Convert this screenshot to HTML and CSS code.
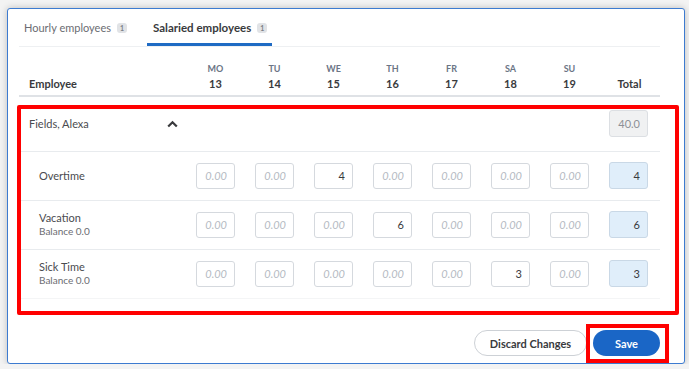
FILE: index.html
```html
<!DOCTYPE html>
<html lang="en">
<head>
    <meta charset="UTF-8">
    <meta name="viewport" content="width=device-width, initial-scale=1.0">
    <title>Timesheet</title>
    <link rel="stylesheet" href="styles.css">
</head>
<body>
    <div class="card">
        <!-- tabs -->
        <div class="tabs">
            <div class="tab">Hourly employees <span class="badge">1</span></div>
            <div class="tab active">Salaried employees <span class="badge">1</span></div>
        </div>

        <!-- week header -->
        <div class="grid head">
            <div class="emp-head">Employee</div>
            <div class="day"><span>MO</span>13</div>
            <div class="day"><span>TU</span>14</div>
            <div class="day"><span>WE</span>15</div>
            <div class="day"><span>TH</span>16</div>
            <div class="day"><span>FR</span>17</div>
            <div class="day"><span>SA</span>18</div>
            <div class="day"><span>SU</span>19</div>
            <div class="day total-head">Total</div>
        </div>

        <div class="group marked">
            <div class="grid emp-row">
                <div class="emp-name">
                    Fields, Alexa
                    <svg width="11" height="8" viewBox="0 0 11 8"><path d="M1.2 6.6 L5.5 2.2 L9.8 6.6" fill="none" stroke="#393a3d" stroke-width="2.2"/></svg>
                </div>
                <div class="cell total"><input class="box grey" value="40.0" readonly></div>
            </div>

            <div class="grid row">
                <div class="label">Overtime</div>
                <div class="cell"><input class="box" placeholder="0.00"></div>
                <div class="cell"><input class="box" placeholder="0.00"></div>
                <div class="cell"><input class="box" value="4"></div>
                <div class="cell"><input class="box" placeholder="0.00"></div>
                <div class="cell"><input class="box" placeholder="0.00"></div>
                <div class="cell"><input class="box" placeholder="0.00"></div>
                <div class="cell"><input class="box" placeholder="0.00"></div>
                <div class="cell total"><input class="box blue" value="4" readonly></div>
            </div>

            <div class="grid row">
                <div class="label">Vacation<small>Balance 0.0</small></div>
                <div class="cell"><input class="box" placeholder="0.00"></div>
                <div class="cell"><input class="box" placeholder="0.00"></div>
                <div class="cell"><input class="box" placeholder="0.00"></div>
                <div class="cell"><input class="box" value="6"></div>
                <div class="cell"><input class="box" placeholder="0.00"></div>
                <div class="cell"><input class="box" placeholder="0.00"></div>
                <div class="cell"><input class="box" placeholder="0.00"></div>
                <div class="cell total"><input class="box blue" value="6" readonly></div>
            </div>

            <div class="grid row last">
                <div class="label">Sick Time<small>Balance 0.0</small></div>
                <div class="cell"><input class="box" placeholder="0.00"></div>
                <div class="cell"><input class="box" placeholder="0.00"></div>
                <div class="cell"><input class="box" placeholder="0.00"></div>
                <div class="cell"><input class="box" placeholder="0.00"></div>
                <div class="cell"><input class="box" placeholder="0.00"></div>
                <div class="cell"><input class="box" value="3"></div>
                <div class="cell"><input class="box" placeholder="0.00"></div>
                <div class="cell total"><input class="box blue" value="3" readonly></div>
            </div>
        </div>

        <div class="actions">
            <button class="btn discard">Discard Changes</button>
            <button class="btn save">Save</button>
        </div>
    </div>
</body>
</html>
```

FILE: styles.css
```css
/* timesheet */
body {
    font-family: "Lato", "Liberation Sans", sans-serif;
    background-color: #f3f3f3;
    color: #393a3d;
    margin: 0;
    padding: 8px 4px 0 7px;
}

.card {
    background-color: #ffffff;
    border: 1px solid #3d7bd0;
    border-radius: 3px;
    box-shadow: 0 0 7px rgba(0, 0, 0, 0.22);
    padding: 9px 24px 7px 11px;
}

/* tabs */
.tabs {
    display: flex;
    gap: 15px;
    border-bottom: 1px solid #eef0f2;
}

.tab {
    display: flex;
    align-items: center;
    gap: 6px;
    font-size: 11px;
    line-height: 20px;
    padding: 0 5px 5px 5px;
    border-bottom: 3px solid transparent;
    color: #6b6c72;
}

.tab.active {
    color: #393a3d;
    font-weight: bold;
    font-size: 11.5px;
    border-bottom-color: #1f6bc4;
    padding-left: 6px;
}

.badge {
    display: inline-flex;
    align-items: center;
    justify-content: center;
    width: 10px;
    height: 10px;
    border-radius: 3px;
    background-color: #e1e3e6;
    color: #7c7f85;
    font-size: 7px;
    font-weight: bold;
    line-height: 1;
}

/* grid */
.grid {
    display: grid;
    grid-template-columns: 167px repeat(7, 59px) 61px;
    align-items: center;
}

.head {
    padding: 15px 0 4px 0;
    border-bottom: 2px solid #dfe2e6;
    font-weight: bold;
    font-size: 11px;
}

.emp-head {
    padding-left: 10px;
    align-self: end;
    line-height: 15px;
}

.day {
    display: flex;
    flex-direction: column;
    align-items: center;
    line-height: 15px;
    align-self: end;
}

.day span {
    font-size: 9px;
    line-height: 14px;
    color: #6b7585;
}

.group {
    position: relative;
}

/* red annotation box */
.marked::after {
    content: "";
    position: absolute;
    top: 8px;
    left: -2px;
    right: -19px;
    bottom: -16px;
    border: 4px solid #ff0000;
    border-radius: 2px;
    pointer-events: none;
}

.emp-row {
    padding: 13px 0 14px 0;
    border-bottom: 1px solid #e8ebee;
}

.emp-name {
    grid-column: 1;
    display: flex;
    justify-content: space-between;
    align-items: center;
    padding: 0 8px 0 10px;
    font-size: 11px;
    color: #4a4b4f;
}

.emp-row .total {
    grid-column: 9;
}

.row {
    padding: 10px 0 11px 0;
    border-bottom: 1px solid #e8ebee;
}

.row.last {
    border-bottom-color: #f4f5f6;
}

.label {
    padding-left: 20px;
    font-size: 11px;
    line-height: 14px;
    color: #4a4b4f;
    display: flex;
    flex-direction: column;
}

.label small {
    font-size: 10px;
    line-height: 13px;
    color: #6b6c72;
}

.cell {
    display: flex;
    justify-content: center;
}

.cell.total {
    justify-content: flex-end;
    padding-right: 12px;
}

.box {
    width: 39px;
    height: 26px;
    box-sizing: border-box;
    border: 1px solid #d5d9de;
    border-radius: 3px;
    padding: 0 7px;
    text-align: right;
    font-family: "Lato", "Liberation Sans", sans-serif;
    font-size: 11px;
    color: #393a3d;
    background-color: #ffffff;
    outline: none;
}

.box::placeholder {
    font-style: italic;
    color: #b4bac2;
}

.box.grey {
    height: 27px;
    background-color: #f0f1f2;
    border-color: #dcdfe3;
    color: #8d9096;
}

.box.blue {
    height: 27px;
    background-color: #e0eefa;
    border-color: #c9d8e6;
}

/* buttons */
.actions {
    display: flex;
    justify-content: flex-end;
    gap: 6px;
    margin-top: 31px;
}

.btn {
    height: 26px;
    border-radius: 13px;
    font-family: "Lato", "Liberation Sans", sans-serif;
    font-size: 11px;
    font-weight: bold;
    cursor: pointer;
}

.discard {
    width: 113px;
    background-color: #ffffff;
    color: #393a3d;
    border: 1px solid #cdd1d6;
}

.save {
    position: relative;
    width: 67px;
    background-color: #1a66c6;
    color: #ffffff;
    border: none;
}

.save::after {
    content: "";
    position: absolute;
    top: -6px;
    left: -7px;
    right: -9px;
    bottom: -7px;
    border: 4px solid #ff0000;
}
```
